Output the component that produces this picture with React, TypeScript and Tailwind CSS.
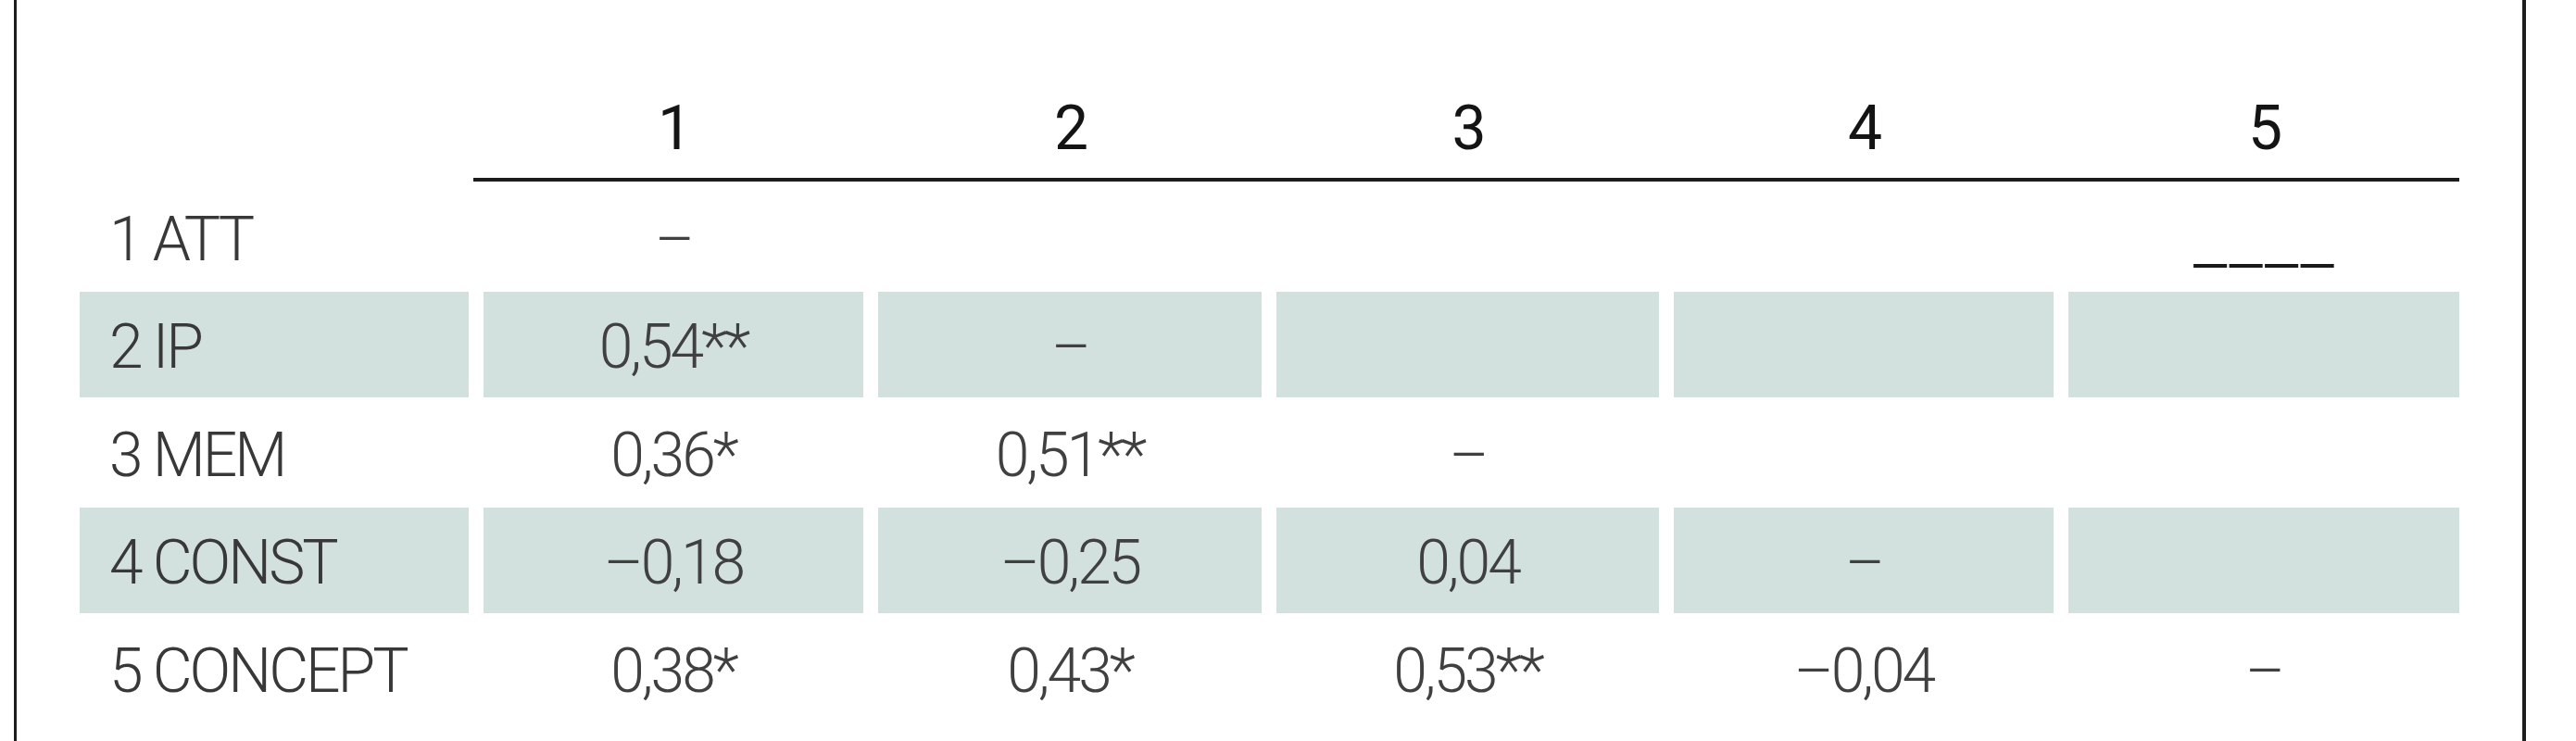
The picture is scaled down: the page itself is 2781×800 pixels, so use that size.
import React from "react";

type Row = { label: string; cells: string[]; band: boolean };

const rows: Row[] = [
  { label: "1 ATT", cells: ["–", "", "", "", "____"], band: false },
  { label: "2 IP", cells: ["0,54**", "–", "", "", ""], band: true },
  { label: "3 MEM", cells: ["0,36*", "0,51**", "–", "", ""], band: false },
  { label: "4 CONST", cells: ["–0,18", "–0,25", "0,04", "–", ""], band: true },
  { label: "5 CONCEPT", cells: ["0,38*", "0,43*", "0,53**", "–0,04", "–"], band: false },
];

const GRID = "grid grid-cols-[420px_410px_414px_413px_410px_422px] gap-x-[16px]";

export default function App() {
  return (
    <div className="w-[2781px] h-[800px] bg-white overflow-hidden font-['Liberation_Sans_Narrow',Roboto,sans-serif] text-[66px] leading-[66px]">
      <div className="ml-[15px] w-[2712px] h-[800px] border-l-[3px] border-r-[4px] border-[#1e1e1e] pl-[68px]">
        {/* header */}
        <div className={`${GRID} pt-[106px] pb-[20px] text-[#141414] tracking-[-3px]`}>
          <div />
          {["1", "2", "3", "4", "5"].map((d) => (
            <div key={d} className="flex justify-center">
              {d}
            </div>
          ))}
        </div>
        <div className="ml-[425px] w-[2144px] h-[4px] bg-[#1c1c1c]" />
        {/* body */}
        {rows.map((r) => (
          <div key={r.label} className={`${GRID} ${r.band ? "h-[114px]" : "h-[119px]"}`}>
            <div
              className={`flex items-center pl-[32px] pt-[6px] font-light tracking-[-3px] text-[#383838] ${
                r.band ? "bg-[#d3e1de]" : ""
              }`}
            >
              {r.label}
            </div>
            {r.cells.map((c, i) => (
              <div
                key={i}
                className={`flex items-center justify-center pt-[6px] font-light tracking-[-3px] text-[#404040] ${
                  r.band ? "bg-[#d3e1de]" : ""
                }`}
              >
                {c === "____" ? (
                  <span className="inline-block -translate-y-[3px] pl-[4px] font-['Liberation_Sans',Arial,sans-serif] font-normal text-[62px] tracking-[4px] text-[#1a1a1a]">
                    {c}
                  </span>
                ) : (
                  c
                )}
              </div>
            ))}
          </div>
        ))}
      </div>
    </div>
  );
}
